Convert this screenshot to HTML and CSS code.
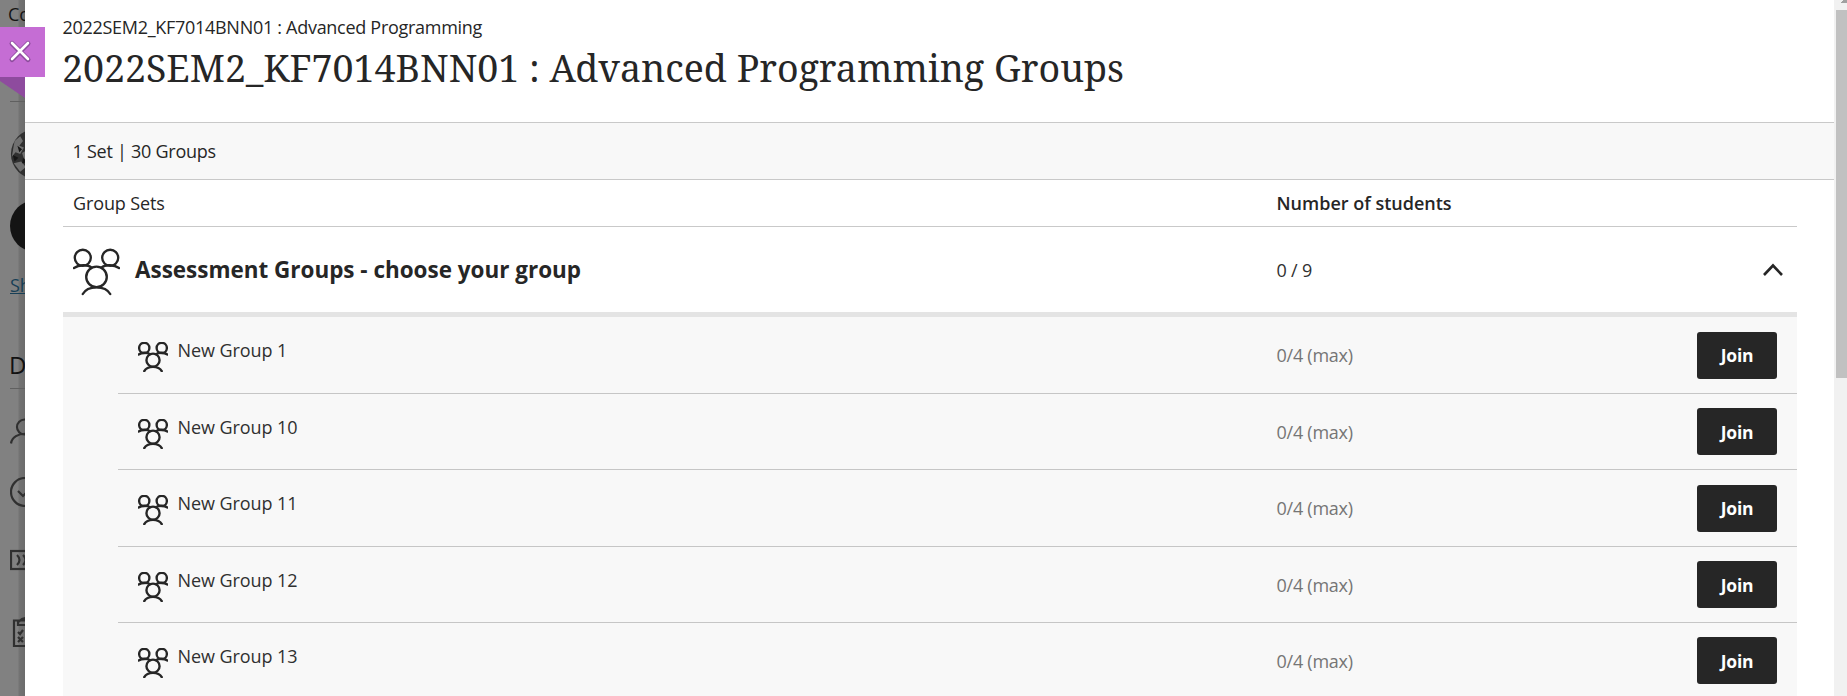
FILE: index.html
```
<!DOCTYPE html>
<html lang="en">
<head>
<meta charset="utf-8">
<title>Advanced Programming Groups</title>
<link rel="stylesheet" href="styles.css">
</head>
<body>
<svg class="defs" width="0" height="0">
  <symbol id="people" viewBox="0 0 48 48">
    <g fill="none" stroke="#262626" stroke-linecap="round">
      <circle cx="10" cy="9.500" r="8.200"/><circle cx="38" cy="9.500" r="8.200"/><circle cx="24" cy="29" r="10.500"/>
      <path d="M1 20C6 16.500 15 16 19 19.500M47 20C42 16.500 33 16 29 19.500M10 46.500C15 37.500 33 37.500 38 46.500"/>
    </g>
  </symbol>
</svg>
<div class="page">
  <aside class="behind">
    <div class="crumb">Co</div>
    <div class="rule first"></div>
    <svg class="avatar" viewBox="0 0 56 56"><circle cx="28" cy="28" r="27" fill="#303030"/><path d="M5 14l6-5 3 5-4 5 5 2-4 7-5-2-4 5 2-12zM13 27l5-3 5 4-3 6-5-1zM4 38l8-2 5 6-6 5zM16 8l8-3 2 8-6 6zM19 40l6-2 1 9-6 3z" fill="#707070"/><path d="M8 19l5 4-3 3zM14 32l4 5-5 1zM3 29l6 3-4 4z" fill="#161616"/></svg>
    <div class="disc"></div>
    <div class="link">Sh</div>
    <div class="details">D</div>
    <div class="rule second"></div>
    <div class="glyphs">
      <svg viewBox="0 0 30 30"><circle cx="14.500" cy="9" r="7.500"/><path d="M1 25.500C3 12.500 27 12.500 29 25.500"/></svg>
      <svg viewBox="0 0 30 30"><circle cx="15" cy="15" r="14"/><path d="M8 14l5 5 9-9"/></svg>
      <svg viewBox="0 0 30 30"><rect x="1" y="6" width="28" height="18"/><path d="M7 10q5 5 0 10M13 10q5 5 0 10"/></svg>
      <svg viewBox="0 0 30 30"><path d="M4 3.500h23V29H4zM8 8V5l4-3 4-1 6 7zM8 15l2 2 3-4M8 20l5 5m0-5l-5 5"/></svg>
    </div>
  </aside>
  <main class="panel">
    <header class="head">
      <div class="course">2022SEM2_KF7014BNN01 : Advanced Programming</div>
      <h1>2022SEM2_KF7014BNN01 : Advanced Programming Groups</h1>
    </header>
    <div class="summary">1 Set | 30 Groups</div>
    <section class="table">
      <div class="cols"><span>Group Sets</span><b>Number of students</b></div>
      <div class="set">
        <div class="set-name"><svg class="icon-lg"><use href="#people"/></svg><h2>Assessment Groups - choose your group</h2></div>
        <span class="total">0 / 9</span>
        <svg class="chevron" viewBox="0 0 22 14"><path d="M2 12L11 2.500 20 12"/></svg>
      </div>
      <div class="rows">
        <div class="row"><div class="name"><svg class="icon-sm"><use href="#people"/></svg><span>New Group 1</span></div><span class="count">0/4 (max)</span><button>Join</button></div>
        <div class="row"><div class="name"><svg class="icon-sm"><use href="#people"/></svg><span>New Group 10</span></div><span class="count">0/4 (max)</span><button>Join</button></div>
        <div class="row"><div class="name"><svg class="icon-sm"><use href="#people"/></svg><span>New Group 11</span></div><span class="count">0/4 (max)</span><button>Join</button></div>
        <div class="row"><div class="name"><svg class="icon-sm"><use href="#people"/></svg><span>New Group 12</span></div><span class="count">0/4 (max)</span><button>Join</button></div>
        <div class="row"><div class="name"><svg class="icon-sm"><use href="#people"/></svg><span>New Group 13</span></div><span class="count">0/4 (max)</span><button>Join</button></div>
      </div>
    </section>
  </main>
  <div class="scroll"><svg viewBox="0 0 13 10"><path d="M6 3h1V2h1V1h1V0h4v3z" fill="#a0a0a0"/></svg><div class="thumb"></div></div>
  <div class="close"><svg viewBox="0 0 45 71"><path d="M0 50H25V71L0 54z" fill="#8e4b9e"/><path d="M0 0H45V50H0z" fill="#c56dd4"/><path d="M12 16.500L28 32.500M28 16.500L12 32.500" stroke="#8e4b9e" stroke-width="5" stroke-linecap="round"/><path d="M12 16L28 32M28 16L12 32" stroke="#fff" stroke-width="2.600" stroke-linecap="round"/></svg></div>
</div>
</body>
</html>
```

FILE: styles.css
```
* { box-sizing: border-box; }
body { margin: 0; font-family: "Open Sans", "Noto Sans", sans-serif; font-size: 18px; color: #262626; background: #fff; }
.defs { position: absolute; }
.page { position: relative; display: flex; width: 1847px; height: 696px; overflow: hidden; }
.behind { width: 25px; flex: none; overflow: hidden; padding-left: 10px; background: linear-gradient(90deg, #818181 0 18px, #737373 19px, #6c6c6c 25px); white-space: nowrap; }
.crumb { height: 101px; padding-top: 2px; margin-left: -2px; line-height: 24px; color: #151515; font-weight: 500; }
.rule { height: 1px; background: #606060; }
.avatar { display: block; width: 52px; height: 52px; margin-top: 26px; }
.disc { width: 52px; height: 52px; margin-top: 20px; border-radius: 50%; background: #141414; }
.link { margin-top: 19px; height: 28px; line-height: 28px; color: #173f56; text-decoration: underline; }
.details { margin-top: 48px; height: 41px; line-height: 36px; font-size: 24px; color: #111; margin-left: -1px; font-weight: 500; }
.glyphs { display: grid; padding-top: 29px; }
.glyphs svg { display: block; width: 30px; height: 30px; fill: none; stroke: #303030; stroke-width: 2.2; }
.glyphs svg:nth-child(2) { margin-top: 29px; }
.glyphs svg:nth-child(3) { margin-top: 38px; }
.glyphs svg:nth-child(4) { margin-top: 42px; }
.panel { width: 1809px; flex: none; background: #fff; }
.head { height: 122px; padding: 15px 0 0 37.5px; }
.course { font-size: 18px; line-height: 25px; letter-spacing: -0.29px; }
h1 { margin: 0 0 0 -0.5px; font: 400 37.54px/56px "Noto Serif", "Droid Serif", "DejaVu Serif Condensed", serif; white-space: nowrap; }
.summary { height: 58px; border: solid #c9c9c9; border-width: 1px 0; background: #f8f8f8; padding-left: 47.5px; line-height: 57px; letter-spacing: -0.26px; }
.table { width: 1734px; margin-left: 38px; }
.cols, .set { display: grid; grid-template-columns: 1203.5px 1fr auto; padding-left: 10px; align-items: center; }
.cols { height: 47px; border-bottom: 1px solid #c9c9c9; font-weight: 500; letter-spacing: -0.12px; }
.cols b { font-weight: 600; letter-spacing: 0; }
.set { height: 90px; border-bottom: 5px solid #e4e4e4; padding-right: 13px; }
.set-name { display: flex; align-items: center; gap: 15px; }
.icon-lg { width: 47px; height: 48px; stroke-width: 2.4; margin-top: 5px; }
h2 { margin: 0; font-size: 22.46px; font-weight: 700; }
.total { color: #303030; letter-spacing: -0.2px; }
.chevron { width: 22px; height: 14px; fill: none; stroke: #262626; stroke-width: 2.6; }
.rows { background: #f8f8f8; padding: 0.7px 0 0 55px; height: 400px; }
.row { height: 76.4px; border-bottom: 1px solid #c6c6c6; display: grid; grid-template-columns: 1158.5px 1fr 80px; padding-right: 20px; align-items: center; }
.name { display: flex; align-items: center; gap: 9.5px; padding-left: 20px; }
.icon-sm { width: 30px; height: 30px; stroke-width: 3.8; margin-top: 4px; }
.name span { margin-top: -10px; font-weight: 500; color: #303030; letter-spacing: -0.08px; }
.count { color: #757575; letter-spacing: -0.25px; }
button { height: 47px; border: 0; border-radius: 3px; padding: 0; background: #262626; color: #fff; font: 700 17.5px "Open Sans", sans-serif; letter-spacing: -0.3px; }
.scroll { width: 13px; flex: none; background: #f1f1f1; }
.scroll svg { display: block; width: 13px; height: 10px; }
.thumb { height: 368px; margin-left: 2px; background: #c1c1c1; }
.close { position: absolute; left: 0; top: 27px; width: 45px; height: 71px; }
.close svg { display: block; width: 45px; height: 71px; }
```
